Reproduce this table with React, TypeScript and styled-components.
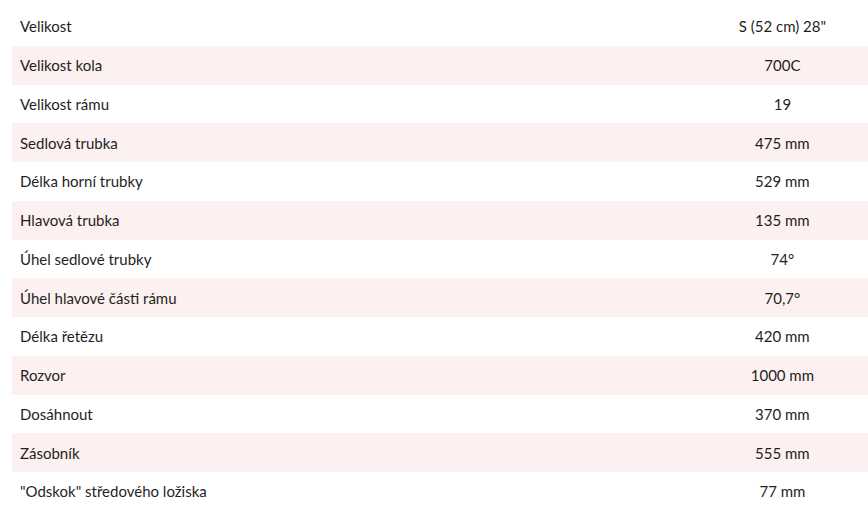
import { createGlobalStyle } from "styled-components";
import styled from "styled-components";

const GlobalStyle = createGlobalStyle`
    html, body {
        margin: 0;
        padding: 0;
        background: #fff;
    }

    body {
        font-family: Lato, "Noto Sans", sans-serif;
        color: #1f1f1f;
    }
`;

const Wrapper = styled.div`
    padding: 7px 0 0 12px;
`;

const SpecTable = styled.table`
    width: 856px;
    border-collapse: collapse;
    font-size: 15px;
`;

const Row = styled.tr<{ $striped: boolean }>`
    height: 38.75px;
    background-color: ${(p) => (p.$striped ? "#fdf0f0" : "#fff")};
`;

const Label = styled.td`
    width: 80%;
    padding: 0 0 0 8px;
    text-align: left;
    vertical-align: middle;
`;

const Value = styled.td`
    width: 20%;
    padding: 0;
    text-align: center;
    vertical-align: middle;
`;

const specs: [string, string][] = [
    ["Velikost", 'S (52 cm) 28"'],
    ["Velikost kola", "700C"],
    ["Velikost rámu", "19"],
    ["Sedlová trubka", "475 mm"],
    ["Délka horní trubky", "529 mm"],
    ["Hlavová trubka", "135 mm"],
    ["Úhel sedlové trubky", "74°"],
    ["Úhel hlavové části rámu", "70,7°"],
    ["Délka řetězu", "420 mm"],
    ["Rozvor", "1000 mm"],
    ["Dosáhnout", "370 mm"],
    ["Zásobník", "555 mm"],
    ['"Odskok" středového ložiska', "77 mm"],
];

function App() {
    return (
        <Wrapper>
            <GlobalStyle />
            <SpecTable>
                <tbody>
                    {specs.map(([label, value], i) => (
                        <Row key={label} $striped={i % 2 === 1}>
                            <Label>{label}</Label>
                            <Value>{value}</Value>
                        </Row>
                    ))}
                </tbody>
            </SpecTable>
        </Wrapper>
    );
}

export default App;
